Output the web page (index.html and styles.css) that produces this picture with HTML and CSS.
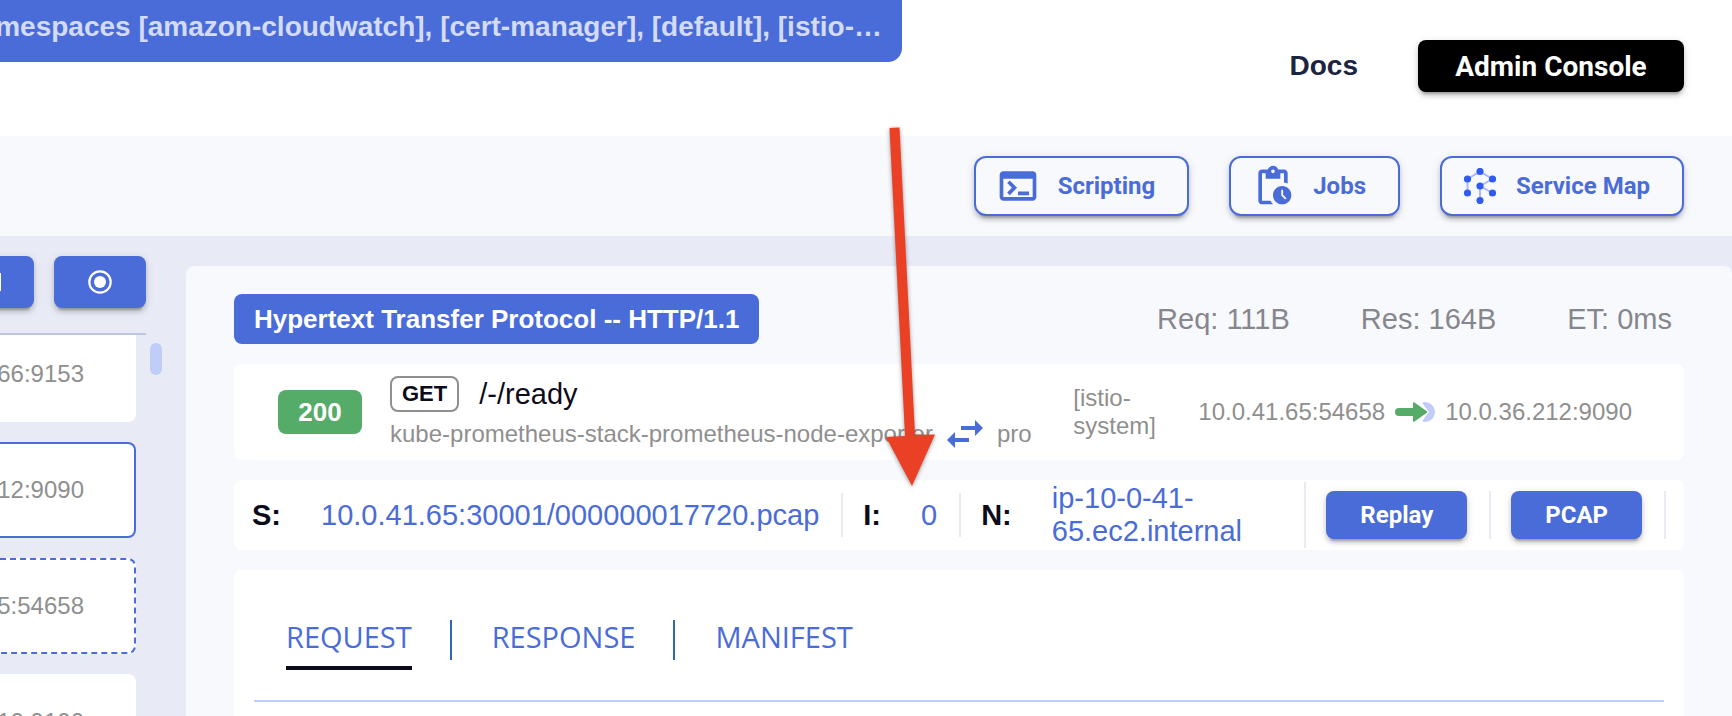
FILE: index.html
```html
<!DOCTYPE html>
<html lang="en">
  <head>
    <meta charset="UTF-8" />
    <title>Traffic viewer</title>
    <link rel="stylesheet" href="styles.css">
  </head>
  <body>
    <!-- Header -->
    <header class="header">
      <div class="banner">
        <span>namespaces [amazon-cloudwatch], [cert-manager], [default], [istio-…</span>
      </div>
      <nav class="header-nav">
        <a class="docs-link" href="#docs">Docs</a>
        <button class="btn btn-black">Admin Console</button>
      </nav>
    </header>

    <!-- Toolbar -->
    <div class="toolbar">
      <button class="btn btn-outline">
        <svg width="44" height="44" viewBox="0 0 24 24" fill="currentColor">
          <path d="M20 4H4c-1.11 0-2 .9-2 2v12c0 1.1.89 2 2 2h16c1.1 0 2-.9 2-2V6c0-1.1-.89-2-2-2zm0 14H4V8h16v10zm-2-1h-6v-2h6v2zM7.5 17l-1.41-1.41L8.67 13l-2.59-2.59L7.5 9l4 4-4 4z" />
        </svg>
        Scripting
      </button>
      <button class="btn btn-outline">
        <svg width="44" height="44" viewBox="0 0 24 24" fill="currentColor">
          <path d="M17 12c-2.76 0-5 2.24-5 5s2.24 5 5 5 5-2.24 5-5-2.24-5-5-5zm1.65 7.35L16.5 17.2V14h1v2.79l1.85 1.85-.7.71zM18 3h-3.18C14.4 1.84 13.3 1 12 1s-2.4.84-2.82 2H6c-1.1 0-2 .9-2 2v15c0 1.1.9 2 2 2h6.11c-.59-.57-1.07-1.25-1.42-2H6V5h2v3h8V5h2v5.08c.71.1 1.38.31 2 .6V5c0-1.1-.9-2-2-2zm-6 2c-.55 0-1-.45-1-1s.45-1 1-1 1 .45 1 1-.45 1-1 1z" />
        </svg>
        Jobs
      </button>
      <button class="btn btn-outline">
        <svg width="36" height="36" viewBox="0 0 36 36">
          <path d="M18 3.5 5.5 11V25M18 3.5 30.5 11 18 18l12.5 7M18 18v14.5" fill="none" stroke="#a9b8f8" stroke-width="2" />
          <g fill="#2f5bf0">
            <circle cx="18" cy="3.5" r="3.6" />
            <circle cx="5.5" cy="11" r="3.6" />
            <circle cx="30.5" cy="11" r="3.6" />
            <circle cx="18" cy="18" r="3.6" />
            <circle cx="5.5" cy="25" r="3.6" />
            <circle cx="30.5" cy="25" r="3.6" />
            <circle cx="18" cy="32.5" r="3.6" />
          </g>
        </svg>
        Service Map
      </button>
    </div>

    <main class="main">
      <!-- Traffic list -->
      <section class="sidebar">
        <div class="stream-controls">
          <button class="btn btn-icon" aria-label="Pause">
            <svg width="26" height="20" viewBox="0 0 26 20" fill="currentColor">
              <path d="M2 1h6v18H2zM20 1h6v18h-6z" />
            </svg>
          </button>
          <button class="btn btn-icon" aria-label="Record">
            <svg width="24" height="24" viewBox="0 0 24 24">
              <circle cx="12" cy="12" r="10.7" fill="none" stroke="currentColor" stroke-width="2.2" />
              <circle cx="12" cy="12" r="6" fill="currentColor" />
            </svg>
          </button>
        </div>
        <div class="stream">
          <div class="entries">
            <div class="entry">66:9153</div>
            <div class="entry selected">12:9090</div>
            <div class="entry related">5:54658</div>
            <div class="entry">10:9100</div>
          </div>
          <div class="scroll-thumb"></div>
        </div>
      </section>

      <!-- Selected entry -->
      <section class="details">
        <div class="details-top">
          <h2 class="protocol">Hypertext Transfer Protocol -- HTTP/1.1</h2>
          <div class="stats">
            <span>Req: 111B</span>
            <span>Res: 164B</span>
            <span>ET: 0ms</span>
          </div>
        </div>

        <div class="card summary">
          <span class="status">200</span>
          <div class="summary-main">
            <div class="request-line">
              <span class="method">GET</span>
              <span class="path">/-/ready</span>
            </div>
            <div class="services">
              <span>kube-prometheus-stack-prometheus-node-exporter</span>
              <svg width="36" height="28" viewBox="0 0 36 28" fill="#4a6cd8">
                <path d="M14 6h14V0l8 8-8 8v-6H14zM22 18H8v-6l-8 8 8 8v-6h14z" />
              </svg>
              <span>pro</span>
            </div>
          </div>
          <div class="namespace">[istio-system]</div>
          <div class="addresses">
            <span>10.0.41.65:54658</span>
            <svg width="40" height="20" viewBox="0 0 40 20">
              <circle cx="30" cy="10" r="10" fill="#bfcdf8" />
              <path d="M25-2 34 10 25 22H16V-2z" fill="#fff" />
              <path d="M4 6h14V1.500Q18-.5 19.500.5L31.500 9q1.500 1 0 2L19.500 19.500q-1.500 1-1.500-1V14H4a4 4 0 0 1 0-8z" fill="#55ab68" />
            </svg>
            <span>10.0.36.212:9090</span>
          </div>
        </div>

        <div class="card source">
          <div class="cell">
            <b>S:</b>
            <a href="#pcap">10.0.41.65:30001/000000017720.pcap</a>
          </div>
          <div class="cell">
            <b>I:</b>
            <a href="#index">0</a>
          </div>
          <div class="cell cell-node">
            <b>N:</b>
            <a href="#node">ip-10-0-41-65.ec2.internal</a>
          </div>
          <div class="cell">
            <button class="btn btn-blue">Replay</button>
          </div>
          <div class="cell">
            <button class="btn btn-blue">PCAP</button>
          </div>
        </div>

        <div class="card body">
          <div class="tabs">
            <button class="tab active">REQUEST</button>
            <button class="tab">RESPONSE</button>
            <button class="tab">MANIFEST</button>
          </div>
        </div>
      </section>
    </main>

    <!-- Arrow pointing at the index field -->
    <svg class="pointer" width="50" height="360" viewBox="0 0 50 360" fill="#ea4025">
      <path d="M3.500 1 13.500.5 29 308 49 307.500 26 359 0 310 19 309z" />
    </svg>
  </body>
</html>
```
FILE: styles.css
```css
* {
  box-sizing: border-box;
}

html,
body {
  margin: 0;
  height: 100%;
  overflow: hidden;
}

body {
  position: relative;
  display: flex;
  flex-direction: column;
  background: #ffffff;
  color: #0c0b1a;
  font-family: "Liberation Sans", Arial, sans-serif;
  font-size: 28px;
}

a {
  color: #4a6cd8;
  text-decoration: none;
}

svg {
  display: block;
  flex: none;
}

/* Buttons */
.btn {
  display: flex;
  align-items: center;
  justify-content: center;
  border: none;
  border-radius: 8px;
  font-family: Roboto, sans-serif;
  font-size: 24px;
  font-weight: 700;
  color: #ffffff;
  background: #4a6cd8;
  cursor: pointer;
  box-shadow: 0 6px 2px -4px rgba(0, 0, 0, 0.2),
    0 4px 4px rgba(0, 0, 0, 0.14), 0 2px 10px rgba(0, 0, 0, 0.12);
}

.btn-black {
  width: 266px;
  height: 52px;
  font-size: 28px;
  background: #000000;
}

.btn-outline {
  gap: 18px;
  height: 60px;
  padding: 0 32px 0 20px;
  border: 2px solid #4a6cd8;
  border-radius: 12px;
  color: #4a6cd8;
  background: #f8f9fd;
}

.btn-icon {
  flex: none;
  width: 92px;
  height: 52px;
}

.btn-blue {
  height: 48px;
  padding: 0 34px;
}

/* Header */
.header {
  flex: none;
  display: flex;
  justify-content: space-between;
  height: 136px;
  padding-right: 48px;
}

.banner {
  display: flex;
  justify-content: flex-end;
  align-items: center;
  width: 902px;
  height: 62px;
  padding: 0 20px 8px 0;
  border-radius: 0 0 14px 0;
  overflow: hidden;
  white-space: nowrap;
  font-weight: 700;
  color: #d3dbf6;
  background: #4a6cd8;
}

.header-nav {
  display: flex;
  align-items: center;
  gap: 60px;
  height: 132px;
}

.docs-link {
  font-weight: 700;
  color: #1b2440;
}

/* Toolbar */
.toolbar {
  flex: none;
  display: flex;
  align-items: center;
  justify-content: flex-end;
  gap: 40px;
  height: 100px;
  padding-right: 48px;
  background: #f8f9fd;
}

.main {
  flex: 1;
  display: flex;
  min-height: 0;
  background: #e8eaf6;
}

/* Traffic list */
.sidebar {
  flex: none;
  display: flex;
  flex-direction: column;
  width: 186px;
  padding-top: 20px;
}

.stream-controls {
  display: flex;
  justify-content: flex-end;
  gap: 20px;
  width: 146px;
  padding-bottom: 25px;
  border-bottom: 2px solid #bcc6e2;
}

.stream {
  flex: 1;
  display: flex;
  gap: 14px;
  min-height: 0;
  overflow: hidden;
}

.entries {
  display: flex;
  flex-direction: column;
  gap: 20px;
  width: 136px;
  margin-top: -9px;
}

.entry {
  flex: none;
  display: flex;
  align-items: center;
  justify-content: flex-end;
  height: 96px;
  padding-right: 50px;
  border: 2px solid #ffffff;
  border-left: none;
  border-radius: 0 8px 8px 0;
  font-size: 24px;
  color: #8f8f8f;
  background: #ffffff;
}

.entry.selected {
  border-color: #4a6cd8;
}

.entry.related {
  border-color: #4a6cd8;
  border-style: dashed;
  border-left: none;
}

.scroll-thumb {
  width: 12px;
  height: 32px;
  margin-top: 8px;
  border-radius: 6px;
  background: #bfcdf8;
}

/* Details panel */
.details {
  flex: 1;
  display: flex;
  flex-direction: column;
  gap: 20px;
  min-width: 0;
  margin-top: 30px;
  padding: 28px 48px 0;
  border-radius: 8px 8px 0 0;
  background: #f8f9fd;
}

.details-top {
  display: flex;
  justify-content: space-between;
  align-items: center;
  padding-right: 12px;
}

.protocol {
  margin: 0;
  padding: 0 20px;
  border-radius: 8px;
  font-size: 26px;
  line-height: 50px;
  color: #ffffff;
  background: #4a6cd8;
}

.stats {
  display: flex;
  gap: 71px;
  font-size: 29px;
  color: #86878d;
}

.card {
  flex: none;
  border-radius: 8px;
  background: #ffffff;
}

/* Summary row */
.summary {
  display: flex;
  align-items: center;
  height: 96px;
  padding: 0 52px 0 44px;
  font-size: 24px;
  line-height: 28px;
  color: #8f8f8f;
}

.status {
  width: 84px;
  margin-right: 28px;
  border-radius: 8px;
  font-size: 26px;
  font-weight: 700;
  line-height: 44px;
  text-align: center;
  color: #ffffff;
  background: #55ab68;
}

.summary-main {
  flex: 1;
  min-width: 0;
}

.request-line {
  display: flex;
  align-items: center;
  gap: 20px;
}

.method {
  padding: 0 10px;
  border: 2px solid #8f8f8f;
  border-radius: 8px;
  font-size: 22px;
  font-weight: 700;
  line-height: 32px;
  color: #0c0b1a;
}

.path {
  font-size: 29px;
  color: #0c0b1a;
}

.services {
  display: flex;
  align-items: center;
  gap: 14px;
  margin-top: 8px;
}

.namespace {
  width: 85px;
  margin-right: 40px;
}

.addresses {
  display: flex;
  align-items: center;
  gap: 10px;
}

/* Source row */
.source {
  display: flex;
  align-items: center;
  height: 70px;
  padding: 0 18px;
  font-size: 29px;
  line-height: 33px;
}

.cell {
  display: flex;
  align-items: center;
  gap: 40px;
  min-height: 44px;
  padding: 0 22px 0 20px;
  border-right: 2px solid #e8eaf6;
}

.cell:first-child {
  padding-left: 0;
}

.cell-node {
  flex: 1;
}

/* Request / response body */
.body {
  flex: 1;
  padding: 50px 20px 0;
  border-radius: 8px 8px 0 0;
}

.tabs {
  display: flex;
  height: 82px;
  padding-left: 32px;
  border-bottom: 2px solid #bfcdf8;
}

.tab {
  display: flex;
  height: 50px;
  padding: 0;
  border: none;
  font-family: "Open Sans", sans-serif;
  font-size: 29px;
  line-height: 34px;
  color: #4a6cd8;
  background: none;
  cursor: pointer;
}

.tab.active {
  border-bottom: 4px solid #0c0b1a;
}

.tab + .tab {
  height: 40px;
  margin-left: 38px;
  padding-left: 40px;
  border-left: 2px solid #2d65c0;
}

.pointer {
  position: absolute;
  top: 127px;
  left: 886px;
  filter: drop-shadow(0 1px 2px rgba(0, 0, 0, 0.4));
}
```
